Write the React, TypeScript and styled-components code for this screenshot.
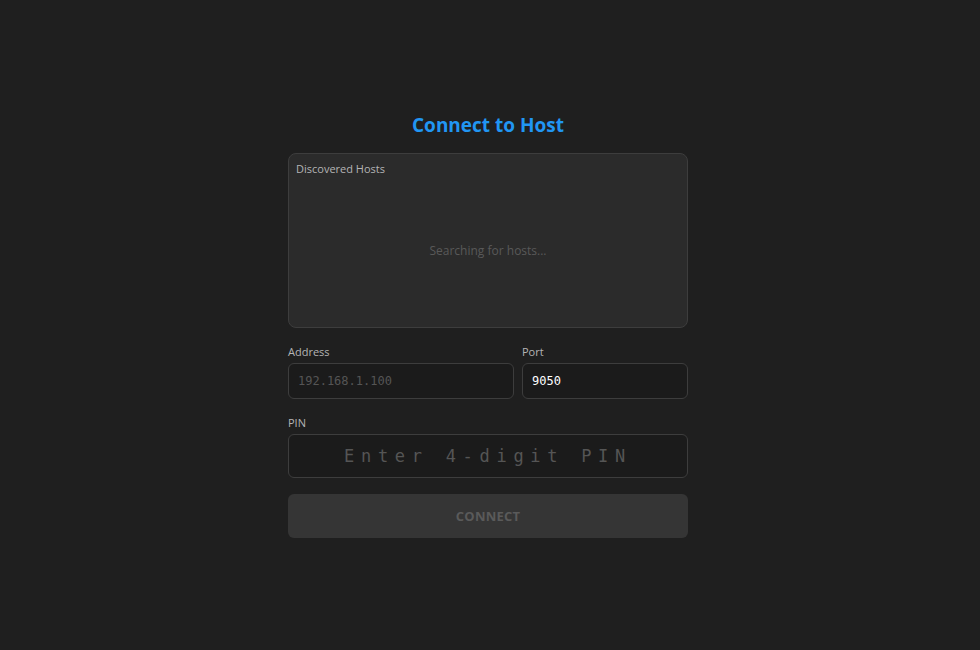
import React from 'react';
import styled, { createGlobalStyle } from 'styled-components';

const GlobalStyle = createGlobalStyle`
  html, body {
    margin: 0;
    padding: 0;
    background: #1f1f1f;
    font-family: "Open Sans", "Noto Sans", sans-serif;
  }
`;

const Page = styled.div`
  min-height: 650px;
  padding: 108px 0 0 288px;
  box-sizing: border-box;
`;

const Panel = styled.div`
  width: 400px;
  display: flex;
  flex-direction: column;
`;

const Title = styled.h1`
  margin: 0 0 11px;
  text-align: center;
  font-size: 19px;
  font-weight: 700;
  color: #2196f3;
  line-height: 34px;
`;

const HostsBox = styled.div`
  height: 175px;
  box-sizing: border-box;
  background: #2b2b2b;
  border: 1px solid #3d3d3d;
  border-radius: 8px;
  padding: 7px 7px;
  display: flex;
  flex-direction: column;
`;

const BoxLabel = styled.div`
  font-size: 11px;
  color: #b4b4b4;
  line-height: 16px;
`;

const Empty = styled.div`
  flex: 1;
  display: flex;
  align-items: center;
  justify-content: center;
  font-size: 12px;
  color: #595959;
  padding-top: 4px;
`;

const Row = styled.div`
  display: grid;
  grid-template-columns: 1fr 166px;
  gap: 8px;
  margin-top: 16px;
`;

const Field = styled.div<{ $top?: number }>`
  display: flex;
  flex-direction: column;
  margin-top: ${p => p.$top ?? 0}px;
`;

const Label = styled.label`
  font-size: 11px;
  color: #b4b4b4;
  line-height: 16px;
  margin-bottom: 3px;
`;

const Input = styled.input<{ $pin?: boolean }>`
  box-sizing: border-box;
  height: ${p => (p.$pin ? 44 : 36)}px;
  background: #1b1b1b;
  border: 1px solid #3d3d3d;
  border-radius: 6px;
  padding: 0 9px;
  color: #ffffff;
  font-family: "DejaVu Sans Mono", "Liberation Mono", monospace;
  font-size: ${p => (p.$pin ? 17 : 12)}px;
  letter-spacing: ${p => (p.$pin ? '6.7px' : '0')};
  text-align: ${p => (p.$pin ? 'center' : 'left')};
  outline: none;

  &::placeholder {
    color: #555555;
  }
`;

const Button = styled.button`
  margin-top: 16px;
  height: 44px;
  border: none;
  border-radius: 6px;
  background: #353535;
  color: #5a5a5a;
  font-family: "Open Sans", "Noto Sans", sans-serif;
  font-size: 13px;
  font-weight: 700;
  letter-spacing: 0.2px;
  cursor: not-allowed;
`;

const App: React.FC = () => {
  return (
    <Page>
      <GlobalStyle />
      <Panel>
        <Title>Connect to Host</Title>
        <HostsBox>
          <BoxLabel>Discovered Hosts</BoxLabel>
          <Empty>Searching for hosts...</Empty>
        </HostsBox>
        <Row>
          <Field>
            <Label>Address</Label>
            <Input placeholder="192.168.1.100" />
          </Field>
          <Field>
            <Label>Port</Label>
            <Input defaultValue="9050" />
          </Field>
        </Row>
        <Field $top={16}>
          <Label>PIN</Label>
          <Input $pin placeholder="Enter 4-digit PIN" maxLength={4} />
        </Field>
        <Button disabled>CONNECT</Button>
      </Panel>
    </Page>
  );
};

export default App;
